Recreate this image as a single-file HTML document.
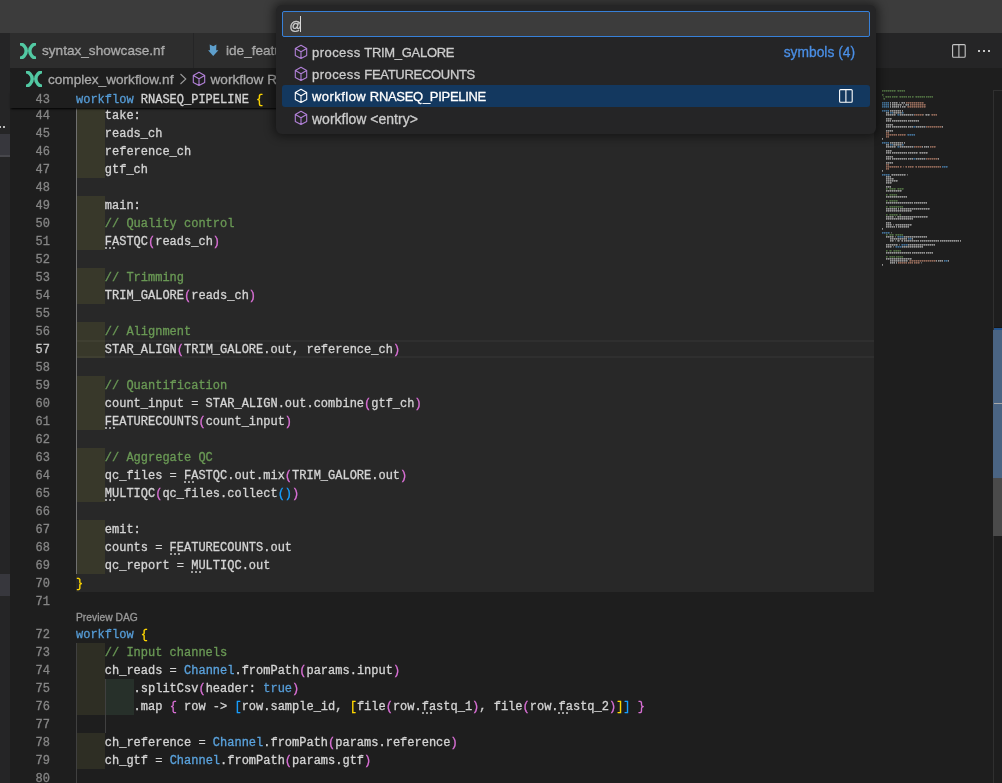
<!DOCTYPE html>
<html><head><meta charset="utf-8">
<style>
*{margin:0;padding:0;box-sizing:border-box}
html,body{-webkit-font-smoothing:antialiased;width:1002px;height:783px;overflow:hidden;background:#1e1e1e;font-family:"Liberation Sans",sans-serif;position:relative}
.abs{position:absolute}
#qp,#tabs,#crumb{will-change:transform}
.row span,.tab,#crumb span{-webkit-text-stroke:0.3px currentColor}
.code,.ln,.lens{will-change:transform;-webkit-text-stroke:0.3px currentColor}
#title{left:0;top:0;width:1002px;height:33px;background:#3c3c3c}
#side{left:0;top:33px;width:10px;height:750px;background:#252526}
#tabs{left:10px;top:33px;width:992px;height:35px;background:#252526}
.tab{position:absolute;top:0;height:35px;background:#2d2d2d;color:#ffffff80;font-size:13.6px;line-height:35px;white-space:nowrap}
#crumb{left:10px;top:68px;width:992px;height:20px;background:#1e1e1e;color:#a9a9a9;font-size:13.6px;line-height:20px;padding-top:2px;white-space:nowrap}
.ln{position:absolute;left:10px;width:40px;text-align:right;color:#858585;font-family:"Liberation Mono",monospace;font-size:12px;height:18px;line-height:18px;padding-top:1px}
.code{position:absolute;left:76px;white-space:pre;color:#d4d4d4;font-family:"Liberation Mono",monospace;font-size:12px;height:18px;line-height:18px;padding-top:1px}
.kw{color:#569cd6}
.bl{color:#5aa2dc}
.cm{color:#6a9955}
.b1{color:#ffd700}
.b2{color:#da70d6}
.b3{color:#179fff}
.lens{font-size:10.3px;color:#999;line-height:15px;height:15px}
#sticky{left:10px;top:90px;width:864px;height:18px;background:#1e1e1e;box-shadow:0 2px 2px -1px #000}
#sticky .ln{left:0}
#sticky .code{left:66px}
#qp{left:276px;top:5px;width:600px;height:129px;background:#252526;border-radius:6px;box-shadow:0 0 10px 3px rgba(0,0,0,.45)}
#qin{left:6px;top:6px;width:588px;height:26px;background:#3c3c3c;border:1px solid #3780d8;border-radius:2px;color:#ccc;font-size:13px;line-height:24px;padding-left:7px}
.row{position:absolute;left:6px;width:588px;height:22px;color:#ccc;font-size:13px;line-height:22px;padding-top:1px;white-space:nowrap;border-radius:3px}
.row.sel{background:#13385f;color:#fff}
</style></head><body>
<div id="title" class="abs"></div>
<div id="side" class="abs"></div>
<div id="tabs" class="abs">
  <div class="tab" style="left:0;width:184px;padding-left:32px">syntax_showcase.nf</div>
  <div class="tab" style="left:183px;width:200px;border-left:1px solid #252526;padding-left:32px">ide_features.nf</div>
</div>
<div id="crumb" class="abs"><span style="position:absolute;left:38px">complex_workflow.nf</span><span style="position:absolute;left:200.5px">workflow RNASEQ_PIPELINE</span></div>
<svg class="abs" style="left:20px;top:43px" width="16" height="16" viewBox="0 0 16 16"><g fill="none" stroke="#52c9a3" stroke-width="3.5"><circle cx="-1.05" cy="8" r="7.25"/><circle cx="17.05" cy="8" r="7.25"/></g></svg><svg class="abs" style="left:26px;top:71px" width="16" height="16" viewBox="0 0 16 16"><g fill="none" stroke="#52c9a3" stroke-width="3.5"><circle cx="-1.05" cy="8" r="7.25"/><circle cx="17.05" cy="8" r="7.25"/></g></svg><svg class="abs" style="left:208px;top:44px" width="11" height="13" viewBox="0 0 11 13"><path d="M1.7,0.5 L5.2,2.3 L8.4,0.5 L8.2,6.3 L10.4,6.3 L5.2,12 L0.1,6.3 L2,6.3 Z" fill="#5e9fcc"/></svg><svg class="abs" style="left:192px;top:71px" width="14" height="16" viewBox="0 0 14 16"><path d="M7,1.3 L12.7,4.5 L12.7,11.5 L7,14.5 L1.3,11.5 L1.3,4.5 Z M1.3,4.5 L7,7.7 L12.7,4.5 M7,7.7 L7,14.5" fill="none" stroke="#b180d7" stroke-width="1.1" stroke-linejoin="round"/></svg><svg class="abs" style="left:179px;top:73px" width="9" height="12" viewBox="0 0 9 12"><path d="M1.5,1 L6.8,6 L1.5,11" fill="none" stroke="#9a9a9a" stroke-width="1.1"/></svg><svg class="abs" style="left:952px;top:44px" width="14" height="14" viewBox="0 0 14 14"><rect x="0.6" y="0.6" width="12.6" height="12.6" rx="1" fill="none" stroke="#c5c5c5" stroke-width="1.1"/><line x1="6.9" y1="0.6" x2="6.9" y2="13.2" stroke="#c5c5c5" stroke-width="1.1"/></svg><div class="abs" style="left:978px;top:50px;width:2px;height:2px;background:#c5c5c5"></div><div class="abs" style="left:983px;top:50px;width:2px;height:2px;background:#c5c5c5"></div><div class="abs" style="left:988px;top:50px;width:2px;height:2px;background:#c5c5c5"></div>
<div class="abs" style="left:0;top:134px;width:10px;height:22px;background:#37373d"></div>
<div class="abs" style="left:0;top:155px;width:10px;height:2px;background:#47474c"></div>
<div class="abs" style="left:0;top:574px;width:10px;height:22px;background:#37373d"></div>
<div class="abs" style="left:0;top:126px;width:1px;height:2px;background:#bbb"></div>
<div class="abs" style="left:3px;top:126px;width:2px;height:2px;background:#bbb"></div>
<div class="abs" style="left:993px;top:90px;width:1px;height:693px;background:#303030"></div>
<div class="abs" style="left:993px;top:90px;width:9px;height:1px;background:#303030"></div>
<div class="abs" style="left:994px;top:327px;width:8px;height:1px;background:#181614"></div>
<div class="abs" style="left:994px;top:328px;width:8px;height:2px;background:#24558f"></div>
<div class="abs" style="left:993px;top:330px;width:9px;height:148px;background:#4a6483"></div>
<div class="abs" style="left:994px;top:403px;width:8px;height:1px;background:#a8a8a8"></div>
<div class="abs" style="left:993px;top:478px;width:9px;height:58px;background:#4a4a4a"></div>
<div class="abs" style="left:76px;top:106px;width:798px;height:486px;background:#282828"></div>
<div class="abs" style="left:77px;top:106px;width:28px;height:18px;background:#38382a"></div>
<div class="abs" style="left:77px;top:124px;width:28px;height:18px;background:#38382a"></div>
<div class="abs" style="left:77px;top:142px;width:28px;height:18px;background:#38382a"></div>
<div class="abs" style="left:77px;top:160px;width:28px;height:18px;background:#38382a"></div>
<div class="abs" style="left:77px;top:196px;width:28px;height:18px;background:#38382a"></div>
<div class="abs" style="left:77px;top:214px;width:28px;height:18px;background:#38382a"></div>
<div class="abs" style="left:77px;top:232px;width:28px;height:18px;background:#38382a"></div>
<div class="abs" style="left:77px;top:268px;width:28px;height:18px;background:#38382a"></div>
<div class="abs" style="left:77px;top:286px;width:28px;height:18px;background:#38382a"></div>
<div class="abs" style="left:77px;top:322px;width:28px;height:18px;background:#38382a"></div>
<div class="abs" style="left:77px;top:340px;width:28px;height:18px;background:#38382a"></div>
<div class="abs" style="left:77px;top:376px;width:28px;height:18px;background:#38382a"></div>
<div class="abs" style="left:77px;top:394px;width:28px;height:18px;background:#38382a"></div>
<div class="abs" style="left:77px;top:412px;width:28px;height:18px;background:#38382a"></div>
<div class="abs" style="left:77px;top:448px;width:28px;height:18px;background:#38382a"></div>
<div class="abs" style="left:77px;top:466px;width:28px;height:18px;background:#38382a"></div>
<div class="abs" style="left:77px;top:484px;width:28px;height:18px;background:#38382a"></div>
<div class="abs" style="left:77px;top:520px;width:28px;height:18px;background:#38382a"></div>
<div class="abs" style="left:77px;top:538px;width:28px;height:18px;background:#38382a"></div>
<div class="abs" style="left:77px;top:556px;width:28px;height:18px;background:#38382a"></div>
<div class="abs" style="left:77px;top:643px;width:28px;height:18px;background:#2e2e24"></div>
<div class="abs" style="left:77px;top:661px;width:28px;height:18px;background:#2e2e24"></div>
<div class="abs" style="left:77px;top:679px;width:28px;height:18px;background:#2e2e24"></div>
<div class="abs" style="left:77px;top:697px;width:28px;height:18px;background:#2e2e24"></div>
<div class="abs" style="left:77px;top:733px;width:28px;height:18px;background:#2e2e24"></div>
<div class="abs" style="left:77px;top:751px;width:28px;height:18px;background:#2e2e24"></div>
<div class="abs" style="left:106px;top:679px;width:28px;height:18px;background:#27302a"></div>
<div class="abs" style="left:106px;top:697px;width:28px;height:18px;background:#27302a"></div>
<div class="abs" style="left:76px;top:340px;width:798px;height:18px;border-top:2px solid rgba(255,255,255,0.035);border-bottom:2px solid rgba(255,255,255,0.035)"></div>
<div class="abs" style="left:76px;top:106px;width:1px;height:468px;background:#707070"></div>
<div class="abs" style="left:76px;top:643px;width:1px;height:140px;background:#404040"></div>
<div class="abs" style="left:105px;top:679px;width:1px;height:54px;background:#404040"></div>
<div class="ln" style="top:106px;color:#858585">44</div>
<div class="code" style="top:106px">    take:</div>
<div class="ln" style="top:124px;color:#858585">45</div>
<div class="code" style="top:124px">    reads_ch</div>
<div class="ln" style="top:142px;color:#858585">46</div>
<div class="code" style="top:142px">    reference_ch</div>
<div class="ln" style="top:160px;color:#858585">47</div>
<div class="code" style="top:160px">    gtf_ch</div>
<div class="ln" style="top:178px;color:#858585">48</div>
<div class="ln" style="top:196px;color:#858585">49</div>
<div class="code" style="top:196px">    main:</div>
<div class="ln" style="top:214px;color:#858585">50</div>
<div class="code" style="top:214px"><span class="cm">    // Quality control</span></div>
<div class="ln" style="top:232px;color:#858585">51</div>
<div class="code" style="top:232px">    FASTQC<span class="b2">(</span>reads_ch<span class="b2">)</span></div>
<div class="ln" style="top:250px;color:#858585">52</div>
<div class="ln" style="top:268px;color:#858585">53</div>
<div class="code" style="top:268px"><span class="cm">    // Trimming</span></div>
<div class="ln" style="top:286px;color:#858585">54</div>
<div class="code" style="top:286px">    TRIM_GALORE<span class="b2">(</span>reads_ch<span class="b2">)</span></div>
<div class="ln" style="top:304px;color:#858585">55</div>
<div class="ln" style="top:322px;color:#858585">56</div>
<div class="code" style="top:322px"><span class="cm">    // Alignment</span></div>
<div class="ln" style="top:340px;color:#c6c6c6">57</div>
<div class="code" style="top:340px">    STAR_ALIGN<span class="b2">(</span>TRIM_GALORE.out, reference_ch<span class="b2">)</span></div>
<div class="ln" style="top:358px;color:#858585">58</div>
<div class="ln" style="top:376px;color:#858585">59</div>
<div class="code" style="top:376px"><span class="cm">    // Quantification</span></div>
<div class="ln" style="top:394px;color:#858585">60</div>
<div class="code" style="top:394px">    count_input = STAR_ALIGN.out.combine<span class="b2">(</span>gtf_ch<span class="b2">)</span></div>
<div class="ln" style="top:412px;color:#858585">61</div>
<div class="code" style="top:412px">    FEATURECOUNTS<span class="b2">(</span>count_input<span class="b2">)</span></div>
<div class="ln" style="top:430px;color:#858585">62</div>
<div class="ln" style="top:448px;color:#858585">63</div>
<div class="code" style="top:448px"><span class="cm">    // Aggregate QC</span></div>
<div class="ln" style="top:466px;color:#858585">64</div>
<div class="code" style="top:466px">    qc_files = FASTQC.out.mix<span class="b2">(</span>TRIM_GALORE.out<span class="b2">)</span></div>
<div class="ln" style="top:484px;color:#858585">65</div>
<div class="code" style="top:484px">    MULTIQC<span class="b2">(</span>qc_files.collect<span class="b3">(</span><span class="b3">)</span><span class="b2">)</span></div>
<div class="ln" style="top:502px;color:#858585">66</div>
<div class="ln" style="top:520px;color:#858585">67</div>
<div class="code" style="top:520px">    emit:</div>
<div class="ln" style="top:538px;color:#858585">68</div>
<div class="code" style="top:538px">    counts = FEATURECOUNTS.out</div>
<div class="ln" style="top:556px;color:#858585">69</div>
<div class="code" style="top:556px">    qc_report = MULTIQC.out</div>
<div class="ln" style="top:574px;color:#858585">70</div>
<div class="code" style="top:574px"><span class="b1">}</span></div>
<div class="ln" style="top:592px;color:#858585">71</div>
<div class="ln" style="top:625px;color:#858585">72</div>
<div class="code" style="top:625px"><span class="kw">workflow</span> <span class="b1">{</span></div>
<div class="ln" style="top:643px;color:#858585">73</div>
<div class="code" style="top:643px"><span class="cm">    // Input channels</span></div>
<div class="ln" style="top:661px;color:#858585">74</div>
<div class="code" style="top:661px">    ch_reads = <span class="bl">Channel</span>.fromPath<span class="b2">(</span>params.input<span class="b2">)</span></div>
<div class="ln" style="top:679px;color:#858585">75</div>
<div class="code" style="top:679px">        .splitCsv<span class="b2">(</span>header: <span class="kw">true</span><span class="b2">)</span></div>
<div class="ln" style="top:697px;color:#858585">76</div>
<div class="code" style="top:697px">        .map <span class="b2">{</span> row -&gt; <span class="b3">[</span>row.sample_id, <span class="b1">[</span>file<span class="b2">(</span>row.fastq_1<span class="b2">)</span>, file<span class="b2">(</span>row.fastq_2<span class="b2">)</span><span class="b1">]</span><span class="b3">]</span> <span class="b2">}</span></div>
<div class="ln" style="top:715px;color:#858585">77</div>
<div class="ln" style="top:733px;color:#858585">78</div>
<div class="code" style="top:733px">    ch_reference = <span class="bl">Channel</span>.fromPath<span class="b2">(</span>params.reference<span class="b2">)</span></div>
<div class="ln" style="top:751px;color:#858585">79</div>
<div class="code" style="top:751px">    ch_gtf = <span class="bl">Channel</span>.fromPath<span class="b2">(</span>params.gtf<span class="b2">)</span></div>
<div class="ln" style="top:769px;color:#858585">80</div>
<div class="abs" style="left:104.8px;top:247px;width:2px;height:2px;background:#a0a0a0"></div>
<div class="abs" style="left:108.8px;top:247px;width:2px;height:2px;background:#a0a0a0"></div>
<div class="abs" style="left:112.8px;top:247px;width:2px;height:2px;background:#a0a0a0"></div>
<div class="abs" style="left:104.8px;top:427px;width:2px;height:2px;background:#a0a0a0"></div>
<div class="abs" style="left:108.8px;top:427px;width:2px;height:2px;background:#a0a0a0"></div>
<div class="abs" style="left:112.8px;top:427px;width:2px;height:2px;background:#a0a0a0"></div>
<div class="abs" style="left:184.0px;top:481px;width:2px;height:2px;background:#a0a0a0"></div>
<div class="abs" style="left:188.0px;top:481px;width:2px;height:2px;background:#a0a0a0"></div>
<div class="abs" style="left:192.0px;top:481px;width:2px;height:2px;background:#a0a0a0"></div>
<div class="abs" style="left:104.8px;top:499px;width:2px;height:2px;background:#a0a0a0"></div>
<div class="abs" style="left:108.8px;top:499px;width:2px;height:2px;background:#a0a0a0"></div>
<div class="abs" style="left:112.8px;top:499px;width:2px;height:2px;background:#a0a0a0"></div>
<div class="abs" style="left:169.6px;top:553px;width:2px;height:2px;background:#a0a0a0"></div>
<div class="abs" style="left:173.6px;top:553px;width:2px;height:2px;background:#a0a0a0"></div>
<div class="abs" style="left:177.6px;top:553px;width:2px;height:2px;background:#a0a0a0"></div>
<div class="abs" style="left:191.2px;top:571px;width:2px;height:2px;background:#a0a0a0"></div>
<div class="abs" style="left:195.2px;top:571px;width:2px;height:2px;background:#a0a0a0"></div>
<div class="abs" style="left:199.2px;top:571px;width:2px;height:2px;background:#a0a0a0"></div>
<div class="abs" style="left:421.6px;top:712px;width:2px;height:2px;background:#a0a0a0"></div>
<div class="abs" style="left:425.6px;top:712px;width:2px;height:2px;background:#a0a0a0"></div>
<div class="abs" style="left:429.6px;top:712px;width:2px;height:2px;background:#a0a0a0"></div>
<div class="abs" style="left:558.4px;top:712px;width:2px;height:2px;background:#a0a0a0"></div>
<div class="abs" style="left:562.4px;top:712px;width:2px;height:2px;background:#a0a0a0"></div>
<div class="abs" style="left:566.4px;top:712px;width:2px;height:2px;background:#a0a0a0"></div>
<div class="abs lens" style="left:76px;top:610px">Preview DAG</div>
<div id="sticky" class="abs"><div class="ln" style="top:0">43</div><div class="code" style="top:0"><span class="kw">workflow</span> RNASEQ_PIPELINE <span class="b1">{</span></div></div>
<svg class="abs" style="left:882px;top:90px" width="110" height="200" viewBox="0 0 110 200" shape-rendering="crispEdges"><defs><pattern id="mp" patternUnits="userSpaceOnUse" width="2" height="2"><rect x="0" y="0" width="1" height="1" fill="#fff"/><rect x="1" y="0" width="1" height="1" fill="#999"/><rect x="0" y="1" width="1" height="1" fill="#bbb"/><rect x="1" y="1" width="1" height="1" fill="#555"/></pattern><mask id="mm"><rect width="110" height="200" fill="url(#mp)"/></mask></defs><g opacity="0.65" mask="url(#mm)"><rect x="0" y="0" width="14" height="2" fill="#6a9955"/><rect x="15" y="0" width="8" height="2" fill="#6a9955"/><rect x="0" y="4" width="2" height="2" fill="#6a9955"/><rect x="1" y="6" width="1" height="2" fill="#6a9955"/><rect x="3" y="6" width="6" height="2" fill="#6a9955"/><rect x="10" y="6" width="6" height="2" fill="#6a9955"/><rect x="17" y="6" width="8" height="2" fill="#6a9955"/><rect x="26" y="6" width="3" height="2" fill="#6a9955"/><rect x="30" y="6" width="2" height="2" fill="#6a9955"/><rect x="33" y="6" width="10" height="2" fill="#6a9955"/><rect x="44" y="6" width="7" height="2" fill="#6a9955"/><rect x="1" y="8" width="2" height="2" fill="#6a9955"/><rect x="0" y="12" width="7" height="2" fill="#569cd6"/><rect x="8" y="12" width="1" height="2" fill="#d4d4d4"/><rect x="10" y="12" width="6" height="2" fill="#d4d4d4"/><rect x="17" y="12" width="1" height="2" fill="#d4d4d4"/><rect x="19" y="12" width="4" height="2" fill="#d4d4d4"/><rect x="24" y="12" width="18" height="2" fill="#ce9178"/><rect x="0" y="14" width="7" height="2" fill="#569cd6"/><rect x="8" y="14" width="1" height="2" fill="#d4d4d4"/><rect x="10" y="14" width="10" height="2" fill="#d4d4d4"/><rect x="21" y="14" width="1" height="2" fill="#d4d4d4"/><rect x="23" y="14" width="4" height="2" fill="#d4d4d4"/><rect x="28" y="14" width="16" height="2" fill="#ce9178"/><rect x="0" y="16" width="7" height="2" fill="#569cd6"/><rect x="8" y="16" width="1" height="2" fill="#d4d4d4"/><rect x="10" y="16" width="7" height="2" fill="#d4d4d4"/><rect x="18" y="16" width="1" height="2" fill="#d4d4d4"/><rect x="20" y="16" width="4" height="2" fill="#d4d4d4"/><rect x="25" y="16" width="19" height="2" fill="#ce9178"/><rect x="0" y="20" width="7" height="2" fill="#569cd6"/><rect x="8" y="20" width="11" height="2" fill="#d4d4d4"/><rect x="20" y="20" width="1" height="2" fill="#d4d4d4"/><rect x="4" y="22" width="3" height="2" fill="#d4d4d4"/><rect x="8" y="22" width="3" height="2" fill="#569cd6"/><rect x="11" y="22" width="9" height="2" fill="#d4d4d4"/><rect x="20" y="22" width="2" height="2" fill="#569cd6"/><rect x="4" y="24" width="10" height="2" fill="#d4d4d4"/><rect x="15" y="24" width="3" height="2" fill="#569cd6"/><rect x="18" y="24" width="13" height="2" fill="#d4d4d4"/><rect x="31" y="24" width="1" height="2" fill="#569cd6"/><rect x="32" y="24" width="9" height="2" fill="#ce9178"/><rect x="41" y="24" width="1" height="2" fill="#d4d4d4"/><rect x="43" y="24" width="5" height="2" fill="#d4d4d4"/><rect x="49" y="24" width="6" height="2" fill="#ce9178"/><rect x="4" y="28" width="6" height="2" fill="#d4d4d4"/><rect x="4" y="30" width="5" height="2" fill="#d4d4d4"/><rect x="10" y="30" width="15" height="2" fill="#d4d4d4"/><rect x="26" y="30" width="11" height="2" fill="#d4d4d4"/><rect x="4" y="34" width="7" height="2" fill="#d4d4d4"/><rect x="4" y="36" width="5" height="2" fill="#d4d4d4"/><rect x="10" y="36" width="15" height="2" fill="#d4d4d4"/><rect x="26" y="36" width="5" height="2" fill="#d4d4d4"/><rect x="31" y="36" width="3" height="2" fill="#569cd6"/><rect x="34" y="36" width="9" height="2" fill="#d4d4d4"/><rect x="43" y="36" width="1" height="2" fill="#569cd6"/><rect x="44" y="36" width="16" height="2" fill="#ce9178"/><rect x="60" y="36" width="1" height="2" fill="#d4d4d4"/><rect x="4" y="40" width="7" height="2" fill="#d4d4d4"/><rect x="4" y="42" width="3" height="2" fill="#ce9178"/><rect x="4" y="44" width="11" height="2" fill="#ce9178"/><rect x="16" y="44" width="8" height="2" fill="#ce9178"/><rect x="25" y="44" width="8" height="2" fill="#569cd6"/><rect x="4" y="46" width="3" height="2" fill="#ce9178"/><rect x="0" y="48" width="1" height="2" fill="#d4d4d4"/><rect x="0" y="52" width="7" height="2" fill="#569cd6"/><rect x="8" y="52" width="13" height="2" fill="#d4d4d4"/><rect x="22" y="52" width="1" height="2" fill="#d4d4d4"/><rect x="4" y="54" width="3" height="2" fill="#d4d4d4"/><rect x="8" y="54" width="3" height="2" fill="#569cd6"/><rect x="11" y="54" width="9" height="2" fill="#d4d4d4"/><rect x="20" y="54" width="2" height="2" fill="#569cd6"/><rect x="4" y="56" width="10" height="2" fill="#d4d4d4"/><rect x="15" y="56" width="3" height="2" fill="#569cd6"/><rect x="18" y="56" width="13" height="2" fill="#d4d4d4"/><rect x="31" y="56" width="1" height="2" fill="#569cd6"/><rect x="32" y="56" width="8" height="2" fill="#ce9178"/><rect x="40" y="56" width="1" height="2" fill="#d4d4d4"/><rect x="42" y="56" width="5" height="2" fill="#d4d4d4"/><rect x="48" y="56" width="6" height="2" fill="#ce9178"/><rect x="4" y="60" width="6" height="2" fill="#d4d4d4"/><rect x="4" y="62" width="5" height="2" fill="#d4d4d4"/><rect x="10" y="62" width="15" height="2" fill="#d4d4d4"/><rect x="26" y="62" width="10" height="2" fill="#d4d4d4"/><rect x="37" y="62" width="9" height="2" fill="#d4d4d4"/><rect x="4" y="66" width="7" height="2" fill="#d4d4d4"/><rect x="4" y="68" width="5" height="2" fill="#d4d4d4"/><rect x="10" y="68" width="15" height="2" fill="#d4d4d4"/><rect x="26" y="68" width="5" height="2" fill="#d4d4d4"/><rect x="31" y="68" width="3" height="2" fill="#569cd6"/><rect x="34" y="68" width="9" height="2" fill="#d4d4d4"/><rect x="43" y="68" width="1" height="2" fill="#569cd6"/><rect x="44" y="68" width="12" height="2" fill="#ce9178"/><rect x="56" y="68" width="1" height="2" fill="#d4d4d4"/><rect x="4" y="72" width="7" height="2" fill="#d4d4d4"/><rect x="4" y="74" width="3" height="2" fill="#ce9178"/><rect x="4" y="76" width="13" height="2" fill="#ce9178"/><rect x="18" y="76" width="2" height="2" fill="#ce9178"/><rect x="21" y="76" width="1" height="2" fill="#ce9178"/><rect x="23" y="76" width="2" height="2" fill="#ce9178"/><rect x="26" y="76" width="6" height="2" fill="#ce9178"/><rect x="33" y="76" width="2" height="2" fill="#ce9178"/><rect x="36" y="76" width="23" height="2" fill="#ce9178"/><rect x="60" y="76" width="6" height="2" fill="#569cd6"/><rect x="4" y="78" width="3" height="2" fill="#ce9178"/><rect x="0" y="80" width="1" height="2" fill="#d4d4d4"/><rect x="0" y="84" width="8" height="2" fill="#569cd6"/><rect x="9" y="84" width="15" height="2" fill="#d4d4d4"/><rect x="25" y="84" width="1" height="2" fill="#d4d4d4"/><rect x="4" y="86" width="5" height="2" fill="#d4d4d4"/><rect x="4" y="88" width="8" height="2" fill="#d4d4d4"/><rect x="4" y="90" width="12" height="2" fill="#d4d4d4"/><rect x="4" y="92" width="6" height="2" fill="#d4d4d4"/><rect x="4" y="96" width="5" height="2" fill="#d4d4d4"/><rect x="4" y="98" width="2" height="2" fill="#6a9955"/><rect x="7" y="98" width="7" height="2" fill="#6a9955"/><rect x="15" y="98" width="7" height="2" fill="#6a9955"/><rect x="4" y="100" width="6" height="2" fill="#d4d4d4"/><rect x="10" y="100" width="1" height="2" fill="#d4d4d4"/><rect x="11" y="100" width="8" height="2" fill="#d4d4d4"/><rect x="19" y="100" width="1" height="2" fill="#d4d4d4"/><rect x="4" y="104" width="2" height="2" fill="#6a9955"/><rect x="7" y="104" width="8" height="2" fill="#6a9955"/><rect x="4" y="106" width="11" height="2" fill="#d4d4d4"/><rect x="15" y="106" width="1" height="2" fill="#d4d4d4"/><rect x="16" y="106" width="8" height="2" fill="#d4d4d4"/><rect x="24" y="106" width="1" height="2" fill="#d4d4d4"/><rect x="4" y="110" width="2" height="2" fill="#6a9955"/><rect x="7" y="110" width="9" height="2" fill="#6a9955"/><rect x="4" y="112" width="10" height="2" fill="#d4d4d4"/><rect x="14" y="112" width="1" height="2" fill="#d4d4d4"/><rect x="15" y="112" width="16" height="2" fill="#d4d4d4"/><rect x="32" y="112" width="12" height="2" fill="#d4d4d4"/><rect x="44" y="112" width="1" height="2" fill="#d4d4d4"/><rect x="4" y="116" width="2" height="2" fill="#6a9955"/><rect x="7" y="116" width="14" height="2" fill="#6a9955"/><rect x="4" y="118" width="11" height="2" fill="#d4d4d4"/><rect x="16" y="118" width="1" height="2" fill="#d4d4d4"/><rect x="18" y="118" width="22" height="2" fill="#d4d4d4"/><rect x="40" y="118" width="1" height="2" fill="#d4d4d4"/><rect x="41" y="118" width="6" height="2" fill="#d4d4d4"/><rect x="47" y="118" width="1" height="2" fill="#d4d4d4"/><rect x="4" y="120" width="13" height="2" fill="#d4d4d4"/><rect x="17" y="120" width="1" height="2" fill="#d4d4d4"/><rect x="18" y="120" width="11" height="2" fill="#d4d4d4"/><rect x="29" y="120" width="1" height="2" fill="#d4d4d4"/><rect x="4" y="124" width="2" height="2" fill="#6a9955"/><rect x="7" y="124" width="9" height="2" fill="#6a9955"/><rect x="17" y="124" width="2" height="2" fill="#6a9955"/><rect x="4" y="126" width="8" height="2" fill="#d4d4d4"/><rect x="13" y="126" width="1" height="2" fill="#d4d4d4"/><rect x="15" y="126" width="14" height="2" fill="#d4d4d4"/><rect x="29" y="126" width="1" height="2" fill="#d4d4d4"/><rect x="30" y="126" width="15" height="2" fill="#d4d4d4"/><rect x="45" y="126" width="1" height="2" fill="#d4d4d4"/><rect x="4" y="128" width="7" height="2" fill="#d4d4d4"/><rect x="11" y="128" width="1" height="2" fill="#d4d4d4"/><rect x="12" y="128" width="16" height="2" fill="#d4d4d4"/><rect x="28" y="128" width="1" height="2" fill="#d4d4d4"/><rect x="29" y="128" width="1" height="2" fill="#d4d4d4"/><rect x="30" y="128" width="1" height="2" fill="#d4d4d4"/><rect x="4" y="132" width="5" height="2" fill="#d4d4d4"/><rect x="4" y="134" width="6" height="2" fill="#d4d4d4"/><rect x="11" y="134" width="1" height="2" fill="#d4d4d4"/><rect x="13" y="134" width="17" height="2" fill="#d4d4d4"/><rect x="4" y="136" width="9" height="2" fill="#d4d4d4"/><rect x="14" y="136" width="1" height="2" fill="#d4d4d4"/><rect x="16" y="136" width="11" height="2" fill="#d4d4d4"/><rect x="0" y="138" width="1" height="2" fill="#d4d4d4"/><rect x="0" y="142" width="8" height="2" fill="#569cd6"/><rect x="9" y="142" width="1" height="2" fill="#d4d4d4"/><rect x="4" y="144" width="2" height="2" fill="#6a9955"/><rect x="7" y="144" width="5" height="2" fill="#6a9955"/><rect x="13" y="144" width="8" height="2" fill="#6a9955"/><rect x="4" y="146" width="8" height="2" fill="#d4d4d4"/><rect x="13" y="146" width="1" height="2" fill="#d4d4d4"/><rect x="15" y="146" width="7" height="2" fill="#569cd6"/><rect x="22" y="146" width="9" height="2" fill="#d4d4d4"/><rect x="31" y="146" width="1" height="2" fill="#d4d4d4"/><rect x="32" y="146" width="12" height="2" fill="#d4d4d4"/><rect x="44" y="146" width="1" height="2" fill="#d4d4d4"/><rect x="8" y="148" width="9" height="2" fill="#d4d4d4"/><rect x="17" y="148" width="1" height="2" fill="#d4d4d4"/><rect x="18" y="148" width="7" height="2" fill="#d4d4d4"/><rect x="26" y="148" width="4" height="2" fill="#569cd6"/><rect x="30" y="148" width="1" height="2" fill="#d4d4d4"/><rect x="8" y="150" width="4" height="2" fill="#d4d4d4"/><rect x="13" y="150" width="1" height="2" fill="#d4d4d4"/><rect x="15" y="150" width="3" height="2" fill="#d4d4d4"/><rect x="19" y="150" width="2" height="2" fill="#d4d4d4"/><rect x="22" y="150" width="1" height="2" fill="#d4d4d4"/><rect x="23" y="150" width="14" height="2" fill="#d4d4d4"/><rect x="38" y="150" width="1" height="2" fill="#d4d4d4"/><rect x="39" y="150" width="4" height="2" fill="#d4d4d4"/><rect x="43" y="150" width="1" height="2" fill="#d4d4d4"/><rect x="44" y="150" width="11" height="2" fill="#d4d4d4"/><rect x="55" y="150" width="1" height="2" fill="#d4d4d4"/><rect x="56" y="150" width="1" height="2" fill="#d4d4d4"/><rect x="58" y="150" width="4" height="2" fill="#d4d4d4"/><rect x="62" y="150" width="1" height="2" fill="#d4d4d4"/><rect x="63" y="150" width="11" height="2" fill="#d4d4d4"/><rect x="74" y="150" width="1" height="2" fill="#d4d4d4"/><rect x="75" y="150" width="1" height="2" fill="#d4d4d4"/><rect x="76" y="150" width="1" height="2" fill="#d4d4d4"/><rect x="78" y="150" width="1" height="2" fill="#d4d4d4"/><rect x="4" y="154" width="12" height="2" fill="#d4d4d4"/><rect x="17" y="154" width="1" height="2" fill="#d4d4d4"/><rect x="19" y="154" width="7" height="2" fill="#569cd6"/><rect x="26" y="154" width="9" height="2" fill="#d4d4d4"/><rect x="35" y="154" width="1" height="2" fill="#d4d4d4"/><rect x="36" y="154" width="16" height="2" fill="#d4d4d4"/><rect x="52" y="154" width="1" height="2" fill="#d4d4d4"/><rect x="4" y="156" width="6" height="2" fill="#d4d4d4"/><rect x="11" y="156" width="1" height="2" fill="#d4d4d4"/><rect x="13" y="156" width="7" height="2" fill="#569cd6"/><rect x="20" y="156" width="9" height="2" fill="#d4d4d4"/><rect x="29" y="156" width="1" height="2" fill="#d4d4d4"/><rect x="30" y="156" width="10" height="2" fill="#d4d4d4"/><rect x="40" y="156" width="1" height="2" fill="#d4d4d4"/><rect x="4" y="160" width="2" height="2" fill="#6a9955"/><rect x="7" y="160" width="3" height="2" fill="#6a9955"/><rect x="11" y="160" width="8" height="2" fill="#6a9955"/><rect x="4" y="162" width="25" height="2" fill="#d4d4d4"/><rect x="30" y="162" width="13" height="2" fill="#d4d4d4"/><rect x="44" y="162" width="7" height="2" fill="#d4d4d4"/><rect x="4" y="166" width="2" height="2" fill="#6a9955"/><rect x="7" y="166" width="6" height="2" fill="#6a9955"/><rect x="14" y="166" width="7" height="2" fill="#6a9955"/><rect x="4" y="168" width="26" height="2" fill="#d4d4d4"/><rect x="8" y="170" width="18" height="2" fill="#d4d4d4"/><rect x="27" y="170" width="27" height="2" fill="#ce9178"/><rect x="54" y="170" width="1" height="2" fill="#d4d4d4"/><rect x="56" y="170" width="5" height="2" fill="#d4d4d4"/><rect x="62" y="170" width="4" height="2" fill="#569cd6"/><rect x="66" y="170" width="1" height="2" fill="#d4d4d4"/><rect x="8" y="172" width="5" height="2" fill="#d4d4d4"/><rect x="14" y="172" width="1" height="2" fill="#d4d4d4"/><rect x="16" y="172" width="9" height="2" fill="#ce9178"/><rect x="26" y="172" width="5" height="2" fill="#ce9178"/><rect x="32" y="172" width="6" height="2" fill="#ce9178"/><rect x="39" y="172" width="1" height="2" fill="#d4d4d4"/><rect x="0" y="174" width="1" height="2" fill="#d4d4d4"/></g></svg>
<div id="qp" class="abs">
  <div id="qin" class="abs"><span style="position:absolute;left:6.5px;top:2.3px;font-size:12.2px;-webkit-text-stroke:0.35px #ccc">@</span></div>
  <div class="row" style="top:36px"><span style="position:absolute;left:30px;top:0.5px"><span style="letter-spacing:0.45px">process</span> <span style="letter-spacing:-0.3px">TRIM_GALORE</span></span><span style="position:absolute;right:15px;top:1px;color:#4a8fe6;font-size:13.8px">symbols (4)</span></div>
  <div class="row" style="top:58px"><span style="position:absolute;left:30px;top:0.5px"><span style="letter-spacing:0.45px">process</span> <span style="letter-spacing:-0.3px">FEATURECOUNTS</span></span></div>
  <div class="row sel" style="top:80px"><span style="position:absolute;left:30px;top:0.5px"><span style="letter-spacing:0.45px">workflow</span> <span style="letter-spacing:-0.3px">RNASEQ_PIPELINE</span></span></div>
  <div class="row" style="top:102px"><span style="position:absolute;left:30px;top:0.5px;font-size:14px">workflow &lt;entry&gt;</span></div>
<svg class="abs" style="left:18px;top:39px" width="14" height="16" viewBox="0 0 14 16"><path d="M7,1.3 L12.7,4.5 L12.7,11.5 L7,14.5 L1.3,11.5 L1.3,4.5 Z M1.3,4.5 L7,7.7 L12.7,4.5 M7,7.7 L7,14.5" fill="none" stroke="#b180d7" stroke-width="1.1" stroke-linejoin="round"/></svg><svg class="abs" style="left:18px;top:61px" width="14" height="16" viewBox="0 0 14 16"><path d="M7,1.3 L12.7,4.5 L12.7,11.5 L7,14.5 L1.3,11.5 L1.3,4.5 Z M1.3,4.5 L7,7.7 L12.7,4.5 M7,7.7 L7,14.5" fill="none" stroke="#b180d7" stroke-width="1.1" stroke-linejoin="round"/></svg><svg class="abs" style="left:18px;top:83px" width="14" height="16" viewBox="0 0 14 16"><path d="M7,1.3 L12.7,4.5 L12.7,11.5 L7,14.5 L1.3,11.5 L1.3,4.5 Z M1.3,4.5 L7,7.7 L12.7,4.5 M7,7.7 L7,14.5" fill="none" stroke="#ffffff" stroke-width="1.1" stroke-linejoin="round"/></svg><svg class="abs" style="left:18px;top:105px" width="14" height="16" viewBox="0 0 14 16"><path d="M7,1.3 L12.7,4.5 L12.7,11.5 L7,14.5 L1.3,11.5 L1.3,4.5 Z M1.3,4.5 L7,7.7 L12.7,4.5 M7,7.7 L7,14.5" fill="none" stroke="#b180d7" stroke-width="1.1" stroke-linejoin="round"/></svg><svg class="abs" style="left:563px;top:84px" width="14" height="14" viewBox="0 0 14 14"><rect x="0.6" y="0.6" width="12.6" height="12.6" rx="1" fill="none" stroke="#ffffff" stroke-width="1.1"/><line x1="6.9" y1="0.6" x2="6.9" y2="13.2" stroke="#ffffff" stroke-width="1.1"/></svg><div class="abs" style="left:24px;top:11px;width:1px;height:16px;background:#d8d8d8"></div>
</div>
</body></html>
